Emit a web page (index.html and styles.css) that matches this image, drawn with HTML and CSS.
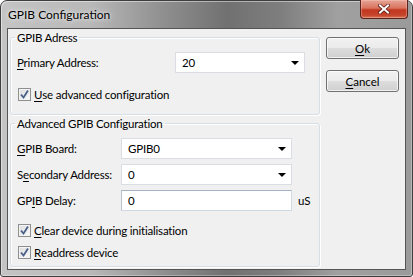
FILE: index.html
```html
<!DOCTYPE html>
<html lang="en">
<head>
    <meta charset="UTF-8">
    <title>GPIB Configuration</title>
    <link rel="stylesheet" href="styles.css">
</head>
<body>

    <div class="window">
        <div class="titlebar">
            <span class="title">GPIB Configuration</span>
            <button class="close">
                <svg width="12" height="10" viewBox="0 0 12 10">
                    <path d="M2 1.5 L10 8.5 M10 1.5 L2 8.5" stroke="#5a1a10" stroke-width="3.6" stroke-linecap="square"/>
                    <path d="M2 1.5 L10 8.5 M10 1.5 L2 8.5" stroke="#fff" stroke-width="2" stroke-linecap="square"/>
                </svg>
            </button>
        </div>

        <div class="client">
            <div class="groups">
                <fieldset class="group group-address">
                    <legend>GPIB Adress</legend>
                    <div class="field-row">
                        <span class="field-label"><u>P</u>rimary Address:</span>
                        <div class="combo combo-wide">20<span class="arrow"></span></div>
                    </div>
                    <label class="check check-first"><span class="box"><svg width="11" height="11" viewBox="0 0 11 11"><path d="M2 5.5 L4.5 8.5 L9 1.5" fill="none" stroke="#4a5f8a" stroke-width="1.8"/></svg></span><u>U</u>se advanced configuration</label>
                </fieldset>

                <fieldset class="group group-advanced">
                    <legend>Advanced GPIB Configuration</legend>
                    <div class="field-row">
                        <span class="field-label short"><u>G</u>PIB Board:</span>
                        <div class="combo">GPIB0<span class="arrow"></span></div>
                    </div>
                    <div class="field-row">
                        <span class="field-label short">S<u>e</u>condary Address:</span>
                        <div class="combo">0<span class="arrow"></span></div>
                    </div>
                    <div class="field-row">
                        <span class="field-label short">GP<u>I</u>B Delay:</span>
                        <div class="textbox">0</div>
                        <span class="unit">uS</span>
                    </div>
                    <label class="check check-first"><span class="box"><svg width="11" height="11" viewBox="0 0 11 11"><path d="M2 5.5 L4.5 8.5 L9 1.5" fill="none" stroke="#4a5f8a" stroke-width="1.8"/></svg></span><u>C</u>lear device during initialisation</label>
                    <label class="check"><span class="box"><svg width="11" height="11" viewBox="0 0 11 11"><path d="M2 5.5 L4.5 8.5 L9 1.5" fill="none" stroke="#4a5f8a" stroke-width="1.8"/></svg></span><u>R</u>eaddress device</label>
                </fieldset>
            </div>

            <div class="buttons">
                <button class="btn"><u>O</u>k</button>
                <button class="btn"><u>C</u>ancel</button>
            </div>
        </div>
    </div>

</body>
</html>
```

FILE: styles.css
```css
* {
    margin: 0;
    padding: 0;
    box-sizing: border-box;
}
body {
    width: 413px;
    height: 277px;
    overflow: hidden;
    font-family: 'Lato', 'Noto Sans', sans-serif;
    font-size: 11.5px;
    letter-spacing: -0.2px;
    color: #000;
    background: #fff;
}
u {
    text-decoration-thickness: 1px;
    text-underline-offset: 2px;
}

/* window frame */
.window {
    width: 413px;
    height: 277px;
    border: 1px solid #3e3e3e;
    border-radius: 7px 7px 3px 3px;
    padding: 0 6px 6px;
    display: flex;
    flex-direction: column;
    background: linear-gradient(90deg, #c4c4c4 0%, #b8b8b8 22%, #8e8e8e 40%, #717171 55%, #7e7e7e 68%, #a0a0a0 82%, #9a9a9a 100%);
    box-shadow: inset 1px 1px 0 rgba(255, 255, 255, 0.45), inset -1px -1px 0 rgba(255, 255, 255, 0.3);
}
.titlebar {
    height: 27px;
    display: flex;
    justify-content: space-between;
    align-items: flex-start;
}
.title {
    font-size: 12px;
    letter-spacing: 0;
    line-height: 18px;
    margin-top: 5px;
    padding-left: 1px;
    text-shadow: 0 0 6px rgba(255, 255, 255, 0.8), 0 0 3px rgba(255, 255, 255, 0.6);
}
.close {
    width: 48px;
    height: 19px;
    margin-top: -1px;
    margin-right: -2px;
    border: 1px solid #5a2218;
    border-top: none;
    border-radius: 0 0 4px 4px;
    background: linear-gradient(#e6a597 0%, #d8735f 45%, #c2371f 55%, #c6452c 85%, #d97a5a 100%);
    display: flex;
    justify-content: center;
    align-items: center;
    box-shadow: inset 0 0 0 1px rgba(255, 210, 200, 0.35);
}

/* client area */
.client {
    flex: 1;
    display: flex;
    border: 1px solid #555;
    background: #f0f0f0;
    padding: 1px 0 0 2px;
}
.groups {
    width: 310px;
    display: flex;
    flex-direction: column;
    gap: 1px;
}
.group {
    border: 1px solid #d5dfe5;
    border-radius: 3px;
    padding: 0 6px;
    box-shadow: inset 1px 1px 0 #fff, 1px 1px 0 #fff;
}
.group legend {
    line-height: 15px;
    padding: 0 2px;
    margin-left: -2px;
}
.group-address { height: 85px; }
.group-advanced { height: 151px; }

.field-row {
    display: flex;
    align-items: center;
    height: 21px;
    margin-top: 5px;
}
.group .field-row:first-of-type { margin-top: 7px; }
.field-label {
    width: 158px;
    flex-shrink: 0;
    white-space: nowrap;
}
.field-label.short { width: 104px; }

.combo, .textbox {
    height: 21px;
    width: 171px;
    background: #fff;
    padding-left: 6px;
    line-height: 19px;
    display: flex;
    align-items: center;
    justify-content: space-between;
}
.combo {
    border: 1px solid #dadde2;
    padding-right: 5px;
}
.combo-wide { width: 130px; }
.arrow {
    width: 0;
    height: 0;
    border-left: 4px solid transparent;
    border-right: 4px solid transparent;
    border-top: 4px solid #000;
}
.textbox {
    border: 1px solid #d0dae5;
    border-top-color: #a7b3c2;
    border-left-color: #b9c4d1;
}
.unit { margin-left: 6px; }

.check {
    display: flex;
    align-items: center;
    height: 15px;
    margin-top: 7px;
    padding-left: 1px;
    white-space: nowrap;
}
.check-first { margin-top: 12px; }
.group-address .check-first { margin-top: 14px; }
.box {
    width: 13px;
    height: 13px;
    margin-right: 3px;
    border: 1px solid #8e8f8f;
    background: linear-gradient(135deg, #dcdcdc, #fafafa);
    display: flex;
    justify-content: center;
    align-items: center;
    box-shadow: inset 0 0 0 1px #f4f4f4;
}

/* buttons */
.buttons {
    margin-left: 6px;
    padding-top: 7px;
    display: flex;
    flex-direction: column;
    gap: 11px;
}
.btn {
    width: 73px;
    height: 22px;
    font-family: inherit;
    font-size: 11.5px;
    color: #000;
    border: 1px solid #707070;
    border-radius: 3px;
    background: linear-gradient(#f2f2f2 0%, #ebebeb 48%, #dddddd 52%, #cfcfcf 100%);
    box-shadow: inset 0 0 0 1px rgba(255, 255, 255, 0.7);
}
```
